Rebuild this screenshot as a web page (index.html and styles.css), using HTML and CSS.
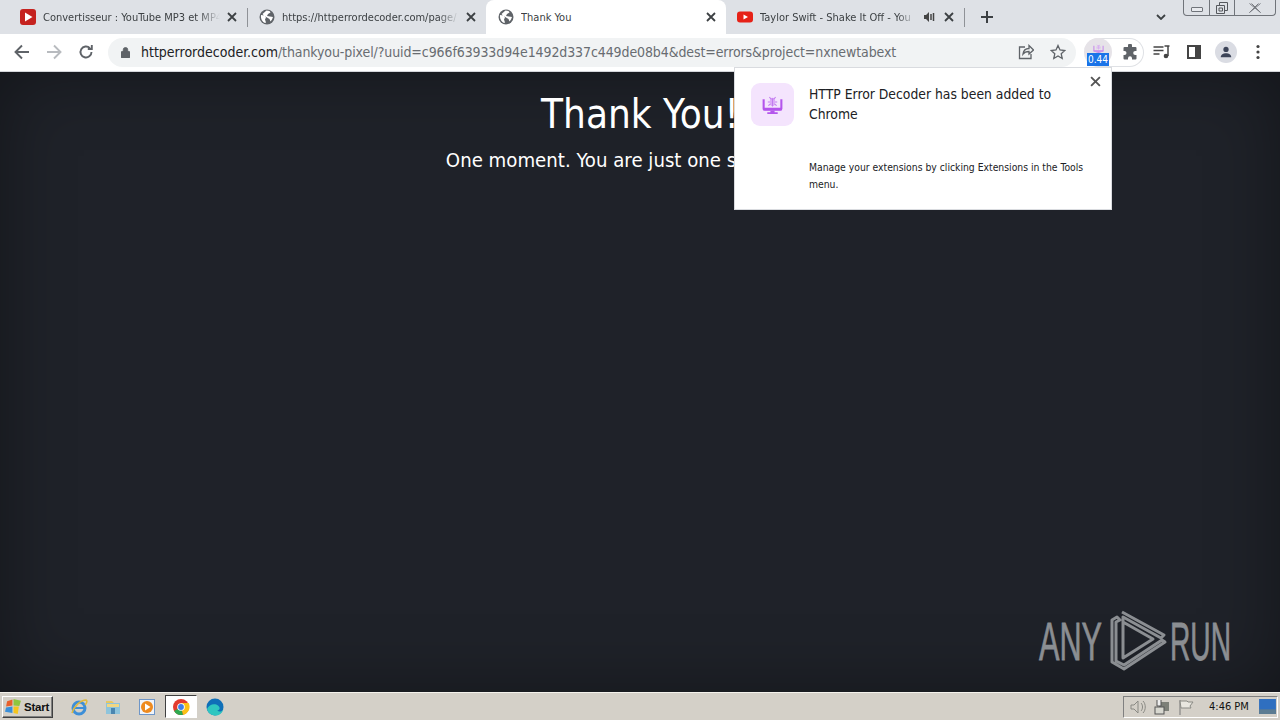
FILE: index.html
```html
<!DOCTYPE html>
<html lang="en">
<head>
<meta charset="utf-8">
<title>Thank You</title>
<link rel="stylesheet" href="styles.css">
</head>
<body>
<header class="chrome">
  <div class="tabstrip">
    <div class="tab">
      <svg class="fav" viewBox="0 0 16 16"><rect width="16" height="16" rx="3" fill="#c5221f"/><path d="M5 3.5v9l7.5-4.500z" fill="#fff"/></svg>
      <span class="tab-title">Convertisseur : YouTube MP3 et MP4</span>
      <svg class="x" viewBox="0 0 10 10"><path d="M1 1l8 8M9 1l-8 8"/></svg>
    </div>
    <div class="tab sep">
      <svg class="fav" viewBox="0 0 16 16"><use href="#globe"/></svg>
      <span class="tab-title">https://httperrordecoder.com/page/</span>
      <svg class="x" viewBox="0 0 10 10"><path d="M1 1l8 8M9 1l-8 8"/></svg>
    </div>
    <div class="tab active">
      <svg class="fav" viewBox="0 0 16 16"><use href="#globe"/></svg>
      <span class="tab-title">Thank You</span>
      <svg class="x" viewBox="0 0 10 10"><path d="M1 1l8 8M9 1l-8 8"/></svg>
    </div>
    <div class="tab sep-right">
      <svg class="fav" viewBox="0 0 16 16"><rect y="2.500" width="16" height="11" rx="3" fill="#e62117"/><path d="M6.500 5.500v5l4.500-2.500z" fill="#fff"/></svg>
      <span class="tab-title short">Taylor Swift - Shake It Off - You</span>
      <svg class="speaker" viewBox="0 0 12 12"><path d="M1 4h2l3-3v10L3 8H1z" fill="#444"/><path d="M8 3v6M10.500 2v8" stroke="#444" stroke-width="1.500"/></svg>
      <svg class="x" viewBox="0 0 10 10"><path d="M1 1l8 8M9 1l-8 8"/></svg>
    </div>
    <svg class="newtab" viewBox="0 0 12 12"><path d="M6 0v12M0 6h12"/></svg>
    <svg class="chev" viewBox="0 0 10 6"><path d="M1 1l4 4 4-4"/></svg>
    <div class="winctl">
      <div class="wbtn min"><span class="min-glyph"></span></div>
      <div class="wbtn rest"><svg viewBox="0 0 12 12"><path d="M3.500 3V.500h8v8H9M.500 3.500h8v8h-8zM3 6h3.500v3H3z"/></svg></div>
      <div class="wbtn close"><svg viewBox="0 0 14 10"><path d="M1.500.500l11 9M12.500.500l-11 9M3.500.500l9 9M10.500.500l-9 9"/></svg></div>
    </div>
  </div>
  <div class="toolbar">
    <svg class="nav" viewBox="0 0 16 16"><path d="M15 8H2M8 1.500L1.500 8 8 14.500"/></svg>
    <svg class="nav dim" viewBox="0 0 16 16"><path d="M1 8h13M8 1.500L14.500 8 8 14.500"/></svg>
    <svg class="nav" viewBox="0 0 16 16"><path d="M13.500 8a5.500 5.500 0 1 1-1.600-3.900M13.800 1v4h-4" /></svg>
    <div class="omnibox">
      <svg class="lock" viewBox="0 0 10 12"><path d="M1 5h8a1 1 0 0 1 1 1v5a1 1 0 0 1-1 1H1a1 1 0 0 1-1-1V6a1 1 0 0 1 1-1zM2.500 5V3a2.500 2.500 0 0 1 5 0v2" fill="#5f6368" stroke="#5f6368"/></svg>
      <span class="url"><b>httperrordecoder.com</b><i>/thankyou-pixel/?uuid=c966f63933d94e1492d337c449de08b4&amp;dest=errors&amp;project=nxnewtabext</i></span>
      <svg class="omni-ic" viewBox="0 0 16 16"><path d="M7 3H1.500v11.500H13V10M5 10c.5-4 3-5.500 6-5.500V1.500L15.500 6 11 10V7.500C8.500 7.500 6.500 8 5 10z"/></svg>
      <svg class="omni-ic" viewBox="0 0 16 16"><path d="M8 1.500l2 4.500 4.800.5-3.600 3.200 1 4.800L8 12l-4.200 2.500 1-4.800L1.200 6.500 6 6z"/></svg>
    </div>
    <div class="extchip">
      <div class="ext-round">
        <svg class="ext-mini" viewBox="0 0 24 24"><use href="#bugscreen"/></svg>
        <span class="badge">0.44</span>
      </div>
      <svg class="puzzle" viewBox="0 0 16 16"><path d="M6 1.500a2 2 0 0 1 4 0V3h3.500a1 1 0 0 1 1 1v3h-1.300a2 2 0 0 0 0 4h1.300v3.500a1 1 0 0 1-1 1H10v-1.300a2 2 0 0 0-4 0v1.300H2.500a1 1 0 0 1-1-1V11h1a2 2 0 0 0 0-4h-1V4a1 1 0 0 1 1-1H6z" fill="#5f6368"/></svg>
    </div>
    <svg class="tool media" viewBox="0 0 16 16"><path d="M0 3h10M0 6.500h10M0 10h6M14.500 2v10" stroke="#444" stroke-width="1.500" fill="none"/><circle cx="12.500" cy="12" r="2.300" fill="#444"/><path d="M11 2h5" stroke="#444" stroke-width="1.500"/></svg>
    <svg class="tool panel" viewBox="0 0 14 14"><path d="M1 1h12v12H1z" fill="none" stroke="#444" stroke-width="2"/><rect x="8" y="1" width="5" height="12" fill="#444"/></svg>
    <div class="avatar"><svg viewBox="0 0 16 16"><circle cx="8" cy="5" r="3" fill="#3c4458"/><path d="M2 14c0-3 3-4.500 6-4.500s6 1.500 6 4.500z" fill="#3c4458"/></svg></div>
    <svg class="tool dots" viewBox="0 0 4 16"><circle cx="2" cy="2.500" r="1.600"/><circle cx="2" cy="8" r="1.600"/><circle cx="2" cy="13.500" r="1.600"/></svg>
  </div>
</header>

<main class="page">
  <h1 class="thanks">Thank You!</h1>
  <p class="moment">One moment. You are just one step away...</p>

  <aside class="popup">
    <div class="popup-icon"><svg viewBox="0 0 24 24"><use href="#bugscreen"/></svg></div>
    <div class="popup-text">
      <p class="popup-title">HTTP Error Decoder has been added to Chrome</p>
      <p class="popup-body">Manage your extensions by clicking Extensions in the Tools menu.</p>
    </div>
    <svg class="popup-x" viewBox="0 0 10 10"><path d="M1 1l8 8M9 1l-8 8"/></svg>
  </aside>

  <svg class="watermark" viewBox="1030 600 210 80">
    <text x="1039" y="660" textLength="63" lengthAdjust="spacingAndGlyphs">ANY</text>
    <text x="1170" y="660" textLength="61" lengthAdjust="spacingAndGlyphs">RUN</text>
    <path d="M1117 617l-5 3v42l12 7 41-27-3-2-38 25-8-4v-39l4-2zM1122 612l42 23-3 3-38-21v41l30-19-30-17" fill="none" stroke="#8b8e92" stroke-width="3" stroke-linejoin="round"/>
  </svg>
</main>

<footer class="taskbar">
  <div class="start">
    <svg class="start-flag" viewBox="0 0 16 16"><path d="M2 3l5-1.500V7L1 8z" fill="#e8602c"/><path d="M8 1l7 1.500-1.500 5L8 7z" fill="#8ec63f"/><path d="M1 9l6-1v6L0 13z" fill="#3a8fd9"/><path d="M8 8h5l-1 7-4-1z" fill="#f5c51d"/></svg>
    <span>Start</span>
  </div>
  <div class="quick">
    <svg class="qi" viewBox="0 0 18 18"><circle cx="9" cy="10" r="6" fill="none" stroke="#3d8fd8" stroke-width="3"/><path d="M4 10h10" stroke="#3d8fd8" stroke-width="2"/><path d="M2 15C4 8 11 2 16 2c2 1 0 4-1 5" fill="none" stroke="#e0b93c" stroke-width="1.500"/></svg>
    <svg class="qi" viewBox="0 0 18 18"><path d="M2 5h14v11H2z" fill="#8ec4dc"/><path d="M2 3h6l2 2H2z" fill="#e9c860"/><path d="M3 6h12v3H3z" fill="#f1d783"/><path d="M7 10h4v6H7z" fill="#4a86b0"/></svg>
    <svg class="qi" viewBox="0 0 18 18"><rect x="1.500" y="1.500" width="15" height="15" fill="#f0f4fa" stroke="#6e96c8"/><circle cx="9" cy="9" r="6" fill="#ee8a1e"/><path d="M7 5.500v7l5.500-3.500z" fill="#fff"/></svg>
    <div class="qi-active">
      <svg class="qi" viewBox="0 0 18 18"><circle cx="9" cy="9" r="8" fill="#e33b2e"/><path d="M9 9L2.100 13a8 8 0 0 0 9 3.700z" fill="#2da94f"/><path d="M9 5h7.600a8 8 0 0 1-5.500 11.700L9 9z" fill="#fbc116"/><circle cx="9" cy="9" r="3.800" fill="#fff"/><circle cx="9" cy="9" r="2.900" fill="#3f7fe8"/></svg>
    </div>
    <svg class="qi" viewBox="0 0 18 18"><circle cx="9" cy="9" r="8.500" fill="#0f6fb8"/><path d="M1 11C3 6 9 5 12 7.500s1.500 5-1 5c2.500 2 5.500 1 6.500-1.500C16 16 12 18 8.500 17.500 5 17 2 15 1 11z" fill="#2fc6c0"/></svg>
  </div>
  <div class="tray">
    <svg class="ti" viewBox="0 0 16 16"><path d="M1 6h3l4-4v12l-4-4H1z" fill="none" stroke="#8a8a84"/><path d="M11 4c2 2 2 6 0 8M13 2c3 3 3 9 0 12" fill="none" stroke="#8a8a84"/></svg>
    <svg class="ti" viewBox="0 0 16 16"><rect x="5" y="3" width="10" height="9" fill="#7d8078"/><rect x="1" y="8" width="9" height="7" fill="#d8d8d0" stroke="#555"/><path d="M3 1v6h4V1" fill="#eee" stroke="#555"/></svg>
    <svg class="ti" viewBox="0 0 16 16"><path d="M2 1v15" stroke="#777"/><path d="M2 2h7l1 1h5l-3 4 1 2H3z" fill="#e8e6df" stroke="#8a8a84"/></svg>
    <span class="clock">4:46 PM</span>
    <svg class="desk" viewBox="0 0 18 16"><rect width="18" height="16" fill="#2f6fc0"/><rect y="11" width="18" height="5" fill="#5c7c92"/></svg>
  </div>
</footer>

<svg class="defs" width="0" height="0">
  <defs>
    <g id="globe"><circle cx="8" cy="8" r="7.500" fill="#5f6368"/><path d="M2 6l3.500.5 1.500 2-1 2 1 3-1 .5C3.500 13 1.500 10 2 6zM7.500 1.500l3 .5 1 1.500-2.500 1.500-1 2 3 .5 3 .5-1 2.500-1.500 2-1-2.500-2.500-1.500L5 6.500 3.500 5z" fill="#fff"/></g>
    <g id="bugscreen"><path d="M3.500 7v9a1 1 0 0 0 1 1h15a1 1 0 0 0 1-1V7" fill="none" stroke="#b455ec" stroke-width="2"/><path d="M3 15h18v2.500H3zM10 18h4v1.500h3V21H7v-1.500h3z" fill="#b455ec"/><ellipse cx="12" cy="9.500" rx="2.600" ry="4" fill="#dcaaf7"/><path d="M9 5l2 2M15 5l-2 2M7.500 9.500h2M14.500 9.500h2M8 13l2-1.500M16 13l-2-1.500M12 6v8" stroke="#c27cf0" stroke-width="1" fill="none"/></g>
  </defs>
</svg>
</body>
</html>
```

FILE: styles.css
```css
* { box-sizing: border-box; margin: 0; padding: 0; }
html, body { height: 100%; }
body {
  width: 1280px;
  height: 720px;
  overflow: hidden;
  display: flex;
  flex-direction: column;
  font-family: "DejaVu Sans Condensed", "Open Sans", sans-serif;
  color: #202124;
  background: #1f2229;
}
.defs { position: absolute; }

/* Browser chrome */
.chrome { flex: none; }
.tabstrip {
  height: 34px;
  background: #dee1e6;
  display: flex;
  align-items: stretch;
  padding-left: 8px;
}
.tab {
  width: 239px;
  display: flex;
  align-items: center;
  gap: 7px;
  padding: 0 10px 0 12px;
  position: relative;
  font-size: 11px;
  color: #3c4043;
}
.tab.sep::before, .tab.sep-right::after {
  content: "";
  position: absolute;
  top: 8px;
  height: 19px;
  width: 1px;
  background: #8f9297;
}
.tab.sep::before { left: 0; }
.tab.sep-right::after { right: 0; }
.tab.active {
  background: #fff;
  border-radius: 8px 8px 0 0;
  width: 240px;
}
.tab.sep-right { padding-left: 11px; padding-right: 11px; }
.fav { width: 16px; height: 16px; flex: none; }
.tab-title {
  flex: 1;
  min-width: 0;
  white-space: nowrap;
  overflow: hidden;
  padding-right: 2px;
  -webkit-mask-image: linear-gradient(to right, #000 88%, transparent);
  mask-image: linear-gradient(to right, #000 88%, transparent);
}
.tab.active .tab-title { -webkit-mask-image: none; mask-image: none; }
.speaker { width: 12px; height: 12px; flex: none; margin-right: 2px; }
.x {
  width: 10px;
  height: 10px;
  flex: none;
  fill: none;
  stroke: #3c4043;
  stroke-width: 1.800;
}
.newtab {
  width: 12px;
  height: 12px;
  align-self: center;
  margin-left: 16px;
  stroke: #3c4043;
  stroke-width: 2;
  fill: none;
  flex: none;
}
.chev {
  width: 10px;
  height: 6px;
  align-self: center;
  margin-left: 163px;
  stroke: #3c4043;
  stroke-width: 1.800;
  fill: none;
  flex: none;
}
.winctl {
  display: flex;
  align-self: flex-start;
  height: 16px;
  margin-left: 17px;
  border: 1px solid #70747a;
  border-top: 0;
  border-radius: 0 0 4px 4px;
}
.wbtn { display: flex; align-items: center; justify-content: center; height: 100%; }
.wbtn + .wbtn { border-left: 1px solid #70747a; }
.min { width: 25px; }
.min-glyph { width: 12px; height: 5px; border: 1px solid #70747a; border-radius: 1px; background: #e8eaee; margin-top: 4px; }
.rest { width: 25px; }
.rest svg { width: 12px; height: 12px; fill: none; stroke: #55585d; }
.close { width: 41px; }
.close svg { width: 14px; height: 10px; fill: none; stroke: #777a80; }

.toolbar {
  height: 38px;
  background: #fff;
  border-bottom: 1px solid #d4d6da;
  display: flex;
  align-items: center;
  padding: 0 0 1px 14px;
  position: relative;
}
.nav {
  width: 16px;
  height: 16px;
  flex: none;
  fill: none;
  stroke: #5f6368;
  stroke-width: 1.900;
  margin-right: 16px;
}
.nav.dim { stroke: #b8bbbf; }
.nav:nth-of-type(3) { margin-right: 14px; }
.omnibox {
  width: 968px;
  height: 29px;
  flex: none;
  background: #f1f3f4;
  border-radius: 15px;
  display: flex;
  align-items: center;
  padding: 0 10px 0 13px;
}
.lock { width: 9px; height: 11px; flex: none; margin-right: 11px; }
.url {
  flex: 1;
  min-width: 0;
  font-size: 14px;
  white-space: nowrap;
  overflow: hidden;
}
.url b { font-weight: 400; color: #202124; }
.url i { font-style: normal; color: #686c71; letter-spacing: -0.1px; }
.omni-ic {
  width: 16px;
  height: 16px;
  flex: none;
  fill: none;
  stroke: #5f6368;
  stroke-width: 1.300;
  margin-left: 16px;
}
.extchip {
  width: 60px;
  height: 29px;
  flex: none;
  margin-left: 8px;
  border: 1px solid #dfe1e5;
  border-left: 0;
  border-radius: 15px;
  display: flex;
  align-items: center;
  justify-content: space-between;
  padding-right: 5px;
}
.ext-round {
  width: 28px;
  height: 28px;
  border-radius: 50%;
  background: #e6e3e8;
  position: relative;
  display: flex;
  justify-content: center;
  padding-top: 4px;
}
.ext-mini { width: 13px; height: 13px; opacity: .6; }
.badge {
  position: absolute;
  left: 3px;
  top: 15px;
  width: 22px;
  height: 13px;
  background: #1a73e8;
  color: #fff;
  font-size: 10px;
  line-height: 14px;
  text-align: center;
  z-index: 2;
}
.puzzle { width: 16px; height: 16px; flex: none; }
.tool { flex: none; }
.media { width: 17px; height: 16px; margin-left: 9px; }
.panel { width: 14px; height: 14px; margin-left: 17px; }
.avatar {
  width: 22px;
  height: 22px;
  margin-left: 14px;
  flex: none;
  border-radius: 50%;
  background: #dadce3;
  display: flex;
  align-items: center;
  justify-content: center;
}
.avatar svg { width: 14px; height: 14px; }
.dots { width: 4px; height: 16px; margin-left: 19px; fill: #444; }

/* Page */
.page {
  flex: 1;
  position: relative;
  text-align: center;
  background: #1f2229;
  box-shadow: inset 0 0 70px rgba(0, 0, 0, .38);
}
.thanks {
  font-size: 40px;
  font-weight: 400;
  line-height: 48px;
  margin-top: 18px;
  color: #fff;
}
.moment {
  font-size: 20.200px;
  line-height: 26px;
  margin-top: 9px;
  color: #fff;
}
.popup {
  position: absolute;
  left: 734px;
  top: -5px;
  width: 378px;
  height: 143px;
  background: #fff;
  border: 1px solid #d9dbdf;
  text-align: left;
  display: flex;
  padding: 15px 16px 0 16px;
  color: #202124;
}
.popup-icon {
  width: 43px;
  height: 43px;
  flex: none;
  border-radius: 9px;
  background: #f4e4fd;
  display: flex;
  align-items: center;
  justify-content: center;
}
.popup-icon svg { width: 25px; height: 25px; }
.popup-text { margin-left: 15px; flex: 1; }
.popup-title { font-size: 13.800px; line-height: 20px; margin-top: 1px; width: 265px; }
.popup-body { font-size: 10.300px; line-height: 17px; margin-top: 35px; width: 288px; }
.popup-x {
  position: absolute;
  right: 10px;
  top: 8px;
  width: 11px;
  height: 11px;
  fill: none;
  stroke: #555;
  stroke-width: 1.700;
}
.watermark {
  position: absolute;
  left: 1030px;
  top: 528px;
  width: 210px;
  height: 80px;
}
.watermark text {
  font-family: "Liberation Sans", sans-serif;
  font-size: 54px;
  fill: #8b8e92;
  stroke: #8b8e92;
  stroke-width: .8px;
}

/* Taskbar */
.taskbar {
  height: 28px;
  flex: none;
  background: #d4d0c8;
  border-top: 1px solid #f4f2ec;
  display: flex;
  align-items: center;
  padding: 0 2px;
}
.start {
  width: 51px;
  height: 22px;
  display: flex;
  align-items: center;
  gap: 2px;
  padding-left: 2px;
  background: #d4d0c8;
  border: 1px solid;
  border-color: #fff #404040 #404040 #fff;
  box-shadow: inset -1px -1px 0 #808080;
  font-family: "Liberation Sans", sans-serif;
  font-size: 11.500px;
  letter-spacing: -0.2px;
  font-weight: 700;
  color: #111;
}
.start-flag { width: 17px; height: 17px; flex: none; }
.quick { display: flex; align-items: center; gap: 16px; margin-left: 17px; }
.qi { width: 18px; height: 18px; flex: none; display: block; }
.qi-active {
  width: 32px;
  height: 23px;
  margin: 0 -7px;
  display: flex;
  align-items: center;
  justify-content: center;
  background: #fff;
  border: 1px solid;
  border-color: #404040 #fff #fff #404040;
}
.tray {
  margin-left: auto;
  width: 155px;
  height: 22px;
  display: flex;
  align-items: center;
  padding-left: 6px;
  border: 1px solid;
  border-color: #808080 #fff #fff #808080;
}
.ti { width: 16px; height: 16px; flex: none; margin-right: 8px; }
.clock { font-size: 11px; margin-left: 7px; color: #111; white-space: nowrap; }
.desk { width: 17px; height: 15px; margin-left: auto; margin-right: 1px; flex: none; }
```
